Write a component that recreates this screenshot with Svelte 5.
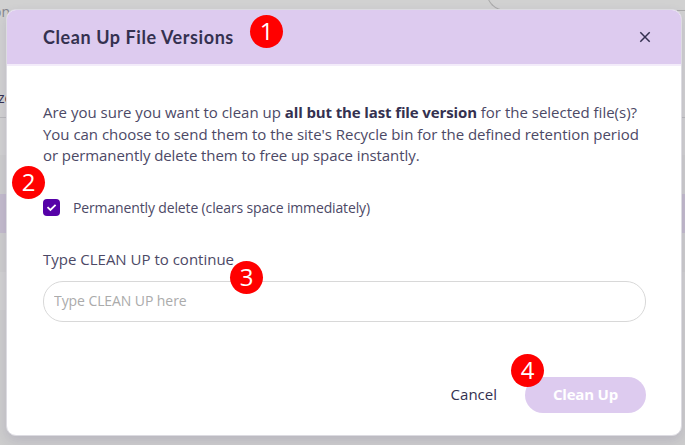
<script>
  let permanent = $state(true);
  let phrase = $state('');
  const steps = [
    { n: 1, x: 267, y: 32 },
    { n: 2, x: 29, y: 183 },
    { n: 3, x: 247, y: 278 },
    { n: 4, x: 528, y: 371 }
  ];
</script>

<div class="stage">
  <div class="page" aria-hidden="true">
    <div class="toolbar"><span class="crumb">on</span><span class="search"></span></div>
    <div class="head"><span>ze</span></div>
    <div class="row"></div>
    <div class="row alt"></div>
    <div class="row selected"></div>
    <div class="row alt"></div>
    <div class="row light"></div>
    <div class="row alt"></div>
  </div>

  <div class="overlay">
    <section class="modal" role="dialog" aria-labelledby="title">
      <header>
        <h1 id="title">Clean Up File Versions</h1>
        <button class="close" aria-label="Close">
          <svg width="12" height="12" viewBox="0 0 12 12"><path d="M1.3 1.3 10.7 10.7M10.7 1.3 1.3 10.7" /></svg>
        </button>
      </header>
      <div class="body">
        <p>
          <span class="l1">Are you sure you want to clean up <b>all but the last file version</b> for the selected file(s)?</span>
          <span class="l2">You can choose to send them to the site's Recycle bin for the defined retention period</span>
          <span class="l3">or permanently delete them to free up space instantly.</span>
        </p>
        <label class="check">
          <input type="checkbox" bind:checked={permanent} />
          <span class="box">
            {#if permanent}
              <svg width="17" height="17" viewBox="0 0 17 17"><path d="M4.5 8.2 7.4 11 12.6 5.8" /></svg>
            {/if}
          </span>
          <span class="text">Permanently delete (clears space immediately)</span>
        </label>
        <label class="prompt" for="phrase">Type CLEAN UP to continue</label>
        <input id="phrase" class="field" type="text" placeholder="Type CLEAN UP here" bind:value={phrase} />
      </div>
      <footer>
        <button class="cancel"><span>Cancel</span></button>
        <button class="submit"><span>Clean Up</span></button>
      </footer>
    </section>
  </div>

  {#each steps as s}
    <span class="badge" style="left:{s.x}px;top:{s.y}px">{s.n}</span>
  {/each}
</div>

<style>
  :global(body) { margin: 0; overflow: hidden; }
  .stage {
    position: relative; width: 685px; height: 445px; overflow: hidden;
    font-family: "Open Sans", "Noto Sans", sans-serif; color: #343150;
  }
  .stage * { box-sizing: border-box; }
  .page { height: 445px; display: flex; flex-direction: column; background: #d1d1d1; }
  .toolbar { height: 78px; display: flex; justify-content: space-between; overflow: hidden; }
  .crumb { font-size: 14px; line-height: 24px; color: #85858d; margin-left: -7px; }
  .search { width: 199px; height: 40px; margin-top: -29px; border: 1px solid #aaa; border-right: 0; border-radius: 20px 0 0 20px; }
  .head { height: 40px; border-bottom: 1px solid #b9b9bb; font-size: 14px; line-height: 39px; }
  .head span { margin-left: -2px; }
  .row { height: 37px; flex: none; background: #d1d1d1; }
  .row.alt { background: #cdcdcd; height: 39px; }
  .row.selected { background: #c3bbcc; height: 39px; }
  .row.light { height: 38px; }
  .row:last-child { height: 135px; }
  .overlay { position: absolute; inset: 0; padding: 9px 3px 9px 6px; }
  .modal {
    height: 427px; background: #fff; border: 1px solid #dcdbe1; border-radius: 10px;
    box-shadow: 0 5px 12px rgba(65, 50, 110, .14);
    display: flex; flex-direction: column; overflow: hidden;
  }
  header {
    height: 56px; flex: none; padding: 0 28px 1px 36px; display: flex; align-items: center;
    justify-content: space-between; background: #ddcbef; border-bottom: 2px solid #f3ecfa;
  }
  h1 { margin: 0; font: 700 18px/24px Lato, sans-serif; letter-spacing: .58px; white-space: nowrap; }
  button { border: 0; background: none; padding: 0; font-family: inherit; color: inherit; }
  .close { width: 16px; height: 16px; display: grid; place-items: center; }
  .close path { stroke: #343150; stroke-width: 1.5; fill: none; }
  .body { padding: 36px 36px 0; display: flex; flex-direction: column; flex: 1; }
  p { margin: 0; font-size: 15px; line-height: 21.5px; color: #4c4966; }
  p span { display: block; width: max-content; white-space: nowrap; }
  .l1 { letter-spacing: 0; }
  .l2 { letter-spacing: -.03px; }
  .l3 { letter-spacing: -.08px; }
  b { font-weight: 700; color: #343150; letter-spacing: -.12px; }
  .check { margin-top: 31px; height: 20px; display: flex; align-items: center; color: #4c4966; }
  .check input { position: absolute; opacity: 0; }
  .box { width: 17px; height: 17px; flex: none; border-radius: 4px; background: #5602a8; display: grid; }
  .box path { fill: none; stroke: #fff; stroke-width: 1.8; }
  .text { margin-left: 13px; font-size: 14px; letter-spacing: -.14px; white-space: nowrap; }
  .prompt { margin-top: 30px; font-size: 15px; line-height: 22px; width: max-content; color: #4c4966; }
  .field {
    margin-top: 11px; width: 603px; height: 41px; border: 1px solid #d8d8d8; border-radius: 20px;
    padding: 0 10px 2px; font: 14px "Open Sans", sans-serif; letter-spacing: -.08px; outline: 0; background: #fff;
  }
  .field::placeholder { color: #ababab; opacity: 1; }
  footer { height: 58px; flex: none; padding: 0 35px 0 0; display: flex; justify-content: flex-end; align-items: flex-start; }
  .cancel { height: 36px; font-size: 15px; margin-right: 28px; padding-bottom: 2px; }
  .submit { width: 121px; height: 36px; border-radius: 18px; background: #ddcbef; color: #fff; font-size: 15px; font-weight: 700; letter-spacing: -.2px; padding-bottom: 2px; }
  .badge {
    position: absolute; width: 33px; height: 33px; margin: -17px 0 0 -17px; border-radius: 50%;
    background: #f00; color: #fff; font-size: 24px; line-height: 32px; text-align: center;
  }
</style>
